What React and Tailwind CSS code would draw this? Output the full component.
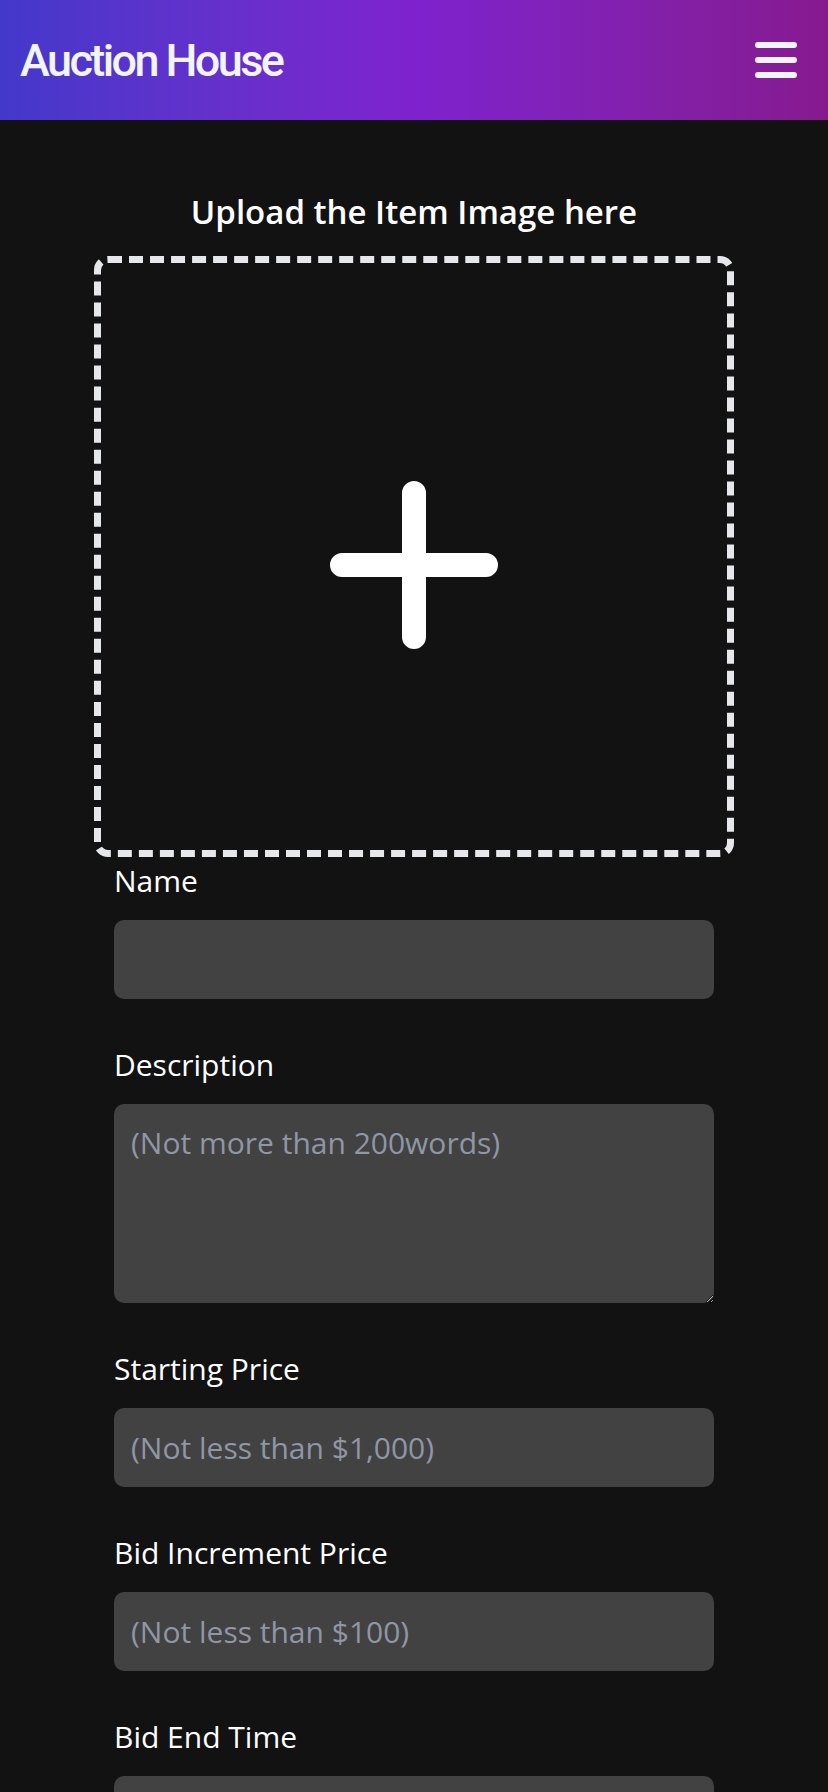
import React from 'react';

const fields = [
  { label: 'Name', placeholder: '' },
  { label: 'Description', placeholder: '(Not more than 200words)', area: true },
  { label: 'Starting Price', placeholder: '(Not less than $1,000)' },
  { label: 'Bid Increment Price', placeholder: '(Not less than $100)' },
  { label: 'Bid End Time', placeholder: '' },
];

const App = () => {
  return (
    <div className="min-h-screen bg-[#121212] text-white font-['Open_Sans',sans-serif]">
      <header className="h-[120px] flex items-center justify-between pl-[20px] pr-[31px] bg-linear-to-r from-[#4338ca] via-[#7e22ce] to-[#86198f]">
        <h1 className="font-['Roboto',sans-serif] font-medium text-[45px] leading-none tracking-[-2.6px] text-slate-100">
          Auction House
        </h1>
        <button className="flex flex-col gap-[9px]" aria-label="menu">
          <span className="block w-[42px] h-[6px] rounded-full bg-slate-100" />
          <span className="block w-[42px] h-[6px] rounded-full bg-slate-100" />
          <span className="block w-[42px] h-[6px] rounded-full bg-slate-100" />
        </button>
      </header>

      <main className="flex flex-col items-center">
        <h2 className="mt-[70px] text-[33px] leading-[44px] font-semibold">Upload the Item Image here</h2>
        <div className="mt-[22px] w-[640px] h-[601px] border-[7px] border-dashed border-gray-200 rounded-[14px] flex items-center justify-center pt-[16px]">
          <svg width="168" height="168" viewBox="0 0 168 168">
            <path d="M12 84h144M84 12v144" stroke="white" strokeWidth="24" strokeLinecap="round" fill="none" />
          </svg>
        </div>

        <form className="w-[600px] mt-[3px] flex flex-col gap-[45px]">
          {fields.map((f) => (
            <div key={f.label} className="flex flex-col">
              <label className="text-[30px] leading-[41px] mb-[19px]">{f.label}</label>
              {f.area ? (
                <textarea
                  placeholder={f.placeholder}
                  className="h-[199px] rounded-[10px] bg-[#424242] px-[17px] py-[18px] text-[30px] leading-[41px] outline-none placeholder:text-[#8f96a6]"
                />
              ) : (
                <input
                  placeholder={f.placeholder}
                  className="h-[79px] rounded-[10px] bg-[#424242] px-[17px] text-[30px] outline-none placeholder:text-[#8f96a6]"
                />
              )}
            </div>
          ))}
        </form>
      </main>
    </div>
  );
};

export default App;
